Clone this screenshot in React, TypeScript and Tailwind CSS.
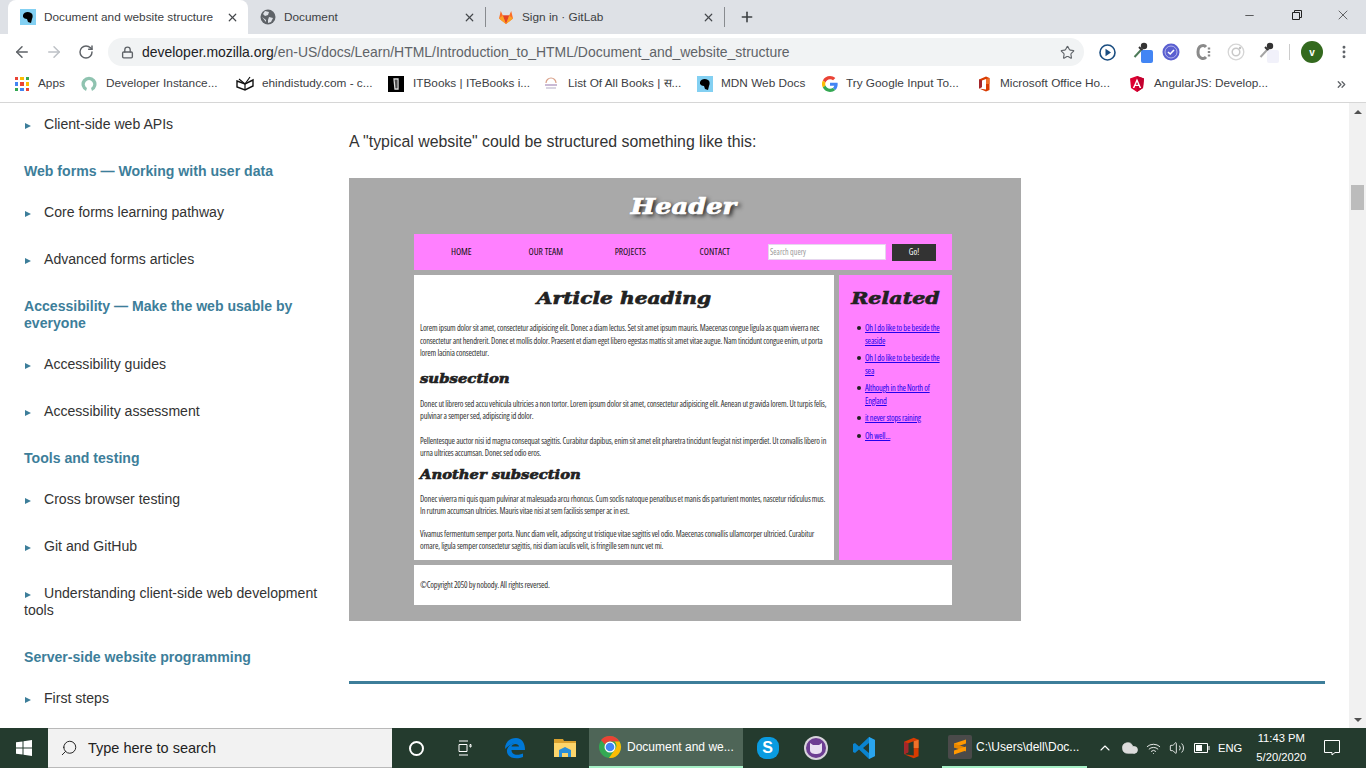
import { ArrowLeft, ArrowRight, RotateCw, Lock, Star, Plus, X, Minus, Search, MoreVertical, ChevronUp, Wifi, Volume2, Cloud, ChevronsRight } from 'lucide-react';

const sidebarRows = [
  { kind: 'item', text: 'Client-side web APIs' },
  { kind: 'head', text: 'Web forms — Working with user data' },
  { kind: 'item', text: 'Core forms learning pathway' },
  { kind: 'item', text: 'Advanced forms articles' },
  { kind: 'head', text: 'Accessibility — Make the web usable by everyone' },
  { kind: 'item', text: 'Accessibility guides' },
  { kind: 'item', text: 'Accessibility assessment' },
  { kind: 'head', text: 'Tools and testing' },
  { kind: 'item', text: 'Cross browser testing' },
  { kind: 'item', text: 'Git and GitHub' },
  { kind: 'item', text: 'Understanding client-side web development tools' },
  { kind: 'head', text: 'Server-side website programming' },
  { kind: 'item', text: 'First steps' },
];

function MdnIcon() {
  return (
    <svg width="16" height="16" viewBox="0 0 16 16" className="shrink-0">
      <rect width="16" height="16" fill="#83d0f2" />
      <path d="M3 6 C4 3 8 2 11 4 C13 5 13 8 12 10 L11 14 L8 13 L7 10 C5 10 4 9 3 8 Z" fill="#000" />
    </svg>
  );
}

function GlobeIcon() {
  return (
    <svg width="16" height="16" viewBox="0 0 16 16" className="shrink-0">
      <circle cx="8" cy="8" r="7.5" fill="#5f6368" />
      <path d="M5 2 L9 3 L8 6 L5 7 L3 5 Z M9 8 L13 9 L11 13 L8 14 L8 11 Z M2 8 L6 11 L6 13 Z" fill="#dee1e6" />
    </svg>
  );
}

function GitlabIcon() {
  return (
    <svg width="16" height="16" viewBox="0 0 16 16" className="shrink-0">
      <path d="M8 15 L1 9.5 L2.8 2 L4.8 6.5 H11.2 L13.2 2 L15 9.5 Z" fill="#fc6d26" />
      <path d="M8 15 L4.8 6.5 H11.2 Z" fill="#e24329" />
      <path d="M8 15 L1 9.5 L4.8 6.5 Z M8 15 L15 9.5 L11.2 6.5 Z" fill="#fca326" />
    </svg>
  );
}

function AppsIcon() {
  const colors = ['#ea4335', '#fbbc04', '#34a853', '#4285f4', '#ea4335', '#fbbc04', '#34a853', '#4285f4', '#ea4335'];
  return (
    <div className="grid h-[14px] w-[14px] shrink-0 grid-cols-3 gap-[2px]">
      {colors.map((c, i) => (
        <div key={i} style={{ background: c }} />
      ))}
    </div>
  );
}

function RingIcon() {
  return (
    <svg width="16" height="16" viewBox="0 0 16 16" className="shrink-0">
      <path d="M5 15 A7.500 7.500 0 1 1 11 15 L10 12 A4.200 4.200 0 1 0 6 12 Z" fill="#8fc3b0" />
    </svg>
  );
}

function BookIcon() {
  return (
    <svg width="18" height="16" viewBox="0 0 18 16" className="shrink-0">
      <path d="M1 5 L9 8 L17 4 L17 10 L9 14 L1 11 Z" fill="#fff" stroke="#111" strokeWidth="1.4" />
      <path d="M9 8 L9 14 M3 3 L9 8 L14 1" fill="none" stroke="#111" strokeWidth="1.2" />
    </svg>
  );
}

function ItBooksIcon() {
  return (
    <svg width="16" height="16" viewBox="0 0 16 16" className="shrink-0">
      <rect width="16" height="16" fill="#000" />
      <path d="M6 3 H10 V13 H7 Z" fill="none" stroke="#ddd" strokeWidth="1.3" />
      <path d="M8 4 V12" stroke="#999" />
    </svg>
  );
}

function ListBooksIcon() {
  return (
    <svg width="16" height="16" viewBox="0 0 16 16" className="shrink-0">
      <path d="M3 7 A5 5 0 0 1 13 7" fill="none" stroke="#d9a088" strokeWidth="1.2" />
      <path d="M2 9 H14" stroke="#b8a3c7" strokeWidth="1.5" />
      <path d="M3 12 H13" stroke="#ccc7d8" strokeWidth="1.5" />
    </svg>
  );
}

function GoogleIcon() {
  return (
    <svg width="16" height="16" viewBox="0 0 48 48" className="shrink-0">
      <path fill="#EA4335" d="M24 9.5c3.5 0 6.7 1.2 9.2 3.6l6.9-6.9C35.9 2.4 30.5 0 24 0 14.6 0 6.5 5.4 2.6 13.2l8 6.2C12.4 13.7 17.7 9.5 24 9.5z" />
      <path fill="#4285F4" d="M47 24.5c0-1.6-.1-3.100-.4-4.500H24v9h12.900c-.6 3-2.200 5.500-4.700 7.200l7.700 6C44.400 37.700 47 31.700 47 24.500z" />
      <path fill="#FBBC05" d="M10.500 28.600A14.500 14.500 0 0 1 10.500 19.400l-8-6.200a24 24 0 0 0 0 21.600l8-6.200z" />
      <path fill="#34A853" d="M24 48c6.500 0 11.900-2.100 15.900-5.800l-7.700-6c-2.200 1.500-5 2.300-8.200 2.300-6.300 0-11.600-4.200-13.500-9.900l-8 6.200C6.500 42.600 14.600 48 24 48z" />
    </svg>
  );
}

function OfficeIcon({ size = 16 }: { size?: number }) {
  return (
    <svg width={size} height={size} viewBox="0 0 16 16" className="shrink-0">
      <path d="M3 3.500 L10 .5 L13.500 2 V14 L10 15.500 L3 12.500 L10 13.500 V3 L6 4.500 V11 L3 12.500 Z" fill="#d83b01" />
      <path d="M10 3 L13.500 2 V8 H10 Z" fill="#f0712a" />
      <path d="M3 3.500 L6 4.500 V11 L3 12.500 Z" fill="#a4262c" />
    </svg>
  );
}

function AngularIcon() {
  return (
    <svg width="16" height="16" viewBox="0 0 16 16" className="shrink-0">
      <path d="M8 0 L15 2.500 L14 12 L8 16 L2 12 L1 2.500 Z" fill="#dd0031" />
      <path d="M8 0 L15 2.500 L14 12 L8 16 Z" fill="#c3002f" />
      <path d="M8 2.500 L3.800 12 H5.400 L6.200 10 H9.800 L10.600 12 H12.200 Z M8 6 L9.200 8.700 H6.800 Z" fill="#fff" />
    </svg>
  );
}

function ChromeIcon() {
  return (
    <svg width="24" height="24" viewBox="0 0 24 24" className="shrink-0">
      <circle cx="12" cy="12" r="11" fill="#34a853" />
      <path d="M12 1 A11 11 0 0 1 21.500 6.500 H12 A5.500 5.500 0 0 0 7 9.500 L3 5 A11 11 0 0 1 12 1 Z" fill="#ea4335" />
      <path d="M21.500 6.500 A11 11 0 0 1 11 23 L16.500 15 A5.500 5.500 0 0 0 16.500 6.500 Z" fill="#fbbc04" />
      <circle cx="12" cy="12" r="5.500" fill="#fff" />
      <circle cx="12" cy="12" r="4.300" fill="#4285f4" />
    </svg>
  );
}

function WindowsLogo() {
  return (
    <svg width="16" height="16" viewBox="0 0 16 16" className="shrink-0">
      <path d="M0 2.300 L6.500 1.400 V7.500 H0 Z M7.500 1.200 L16 0 V7.500 H7.500 Z M0 8.500 H6.500 V14.600 L0 13.700 Z M7.500 8.500 H16 V16 L7.500 14.800 Z" fill="#fff" />
    </svg>
  );
}

function EdgeIcon() {
  return (
    <svg width="24" height="24" viewBox="0 0 24 24" className="shrink-0">
      <path d="M2 13 C2 6 7 2 13 2 C19 2 22 7 22 14 H8.500 C8.500 18 13 20.500 20 17.500 V21 C13 24 3 22 4 14 C5 10 8 8 11 7.500 C8 8 5 10 2 13 Z M8.500 10.500 H16 C16 7 9 7 8.500 10.500 Z" fill="#0078d7" />
    </svg>
  );
}

function FolderIcon() {
  return (
    <svg width="22" height="20" viewBox="0 0 22 20" className="shrink-0">
      <path d="M0 1 H9 L10 3 H22 V19 H0 Z" fill="#d9a12f" />
      <path d="M0 5 H22 V19 H0 Z" fill="#fcd56b" />
      <path d="M5 19 V12 L11 9 L17 12 V19 H14 V15 H8 V19 Z" fill="#2a8fd8" />
    </svg>
  );
}

function SkypeIcon() {
  return (
    <div className="flex h-[22px] w-[22px] shrink-0 items-center justify-center rounded-[9px] bg-[#0a9be0] font-['Liberation_Sans',sans-serif] text-[16px] font-bold text-white">
      S
    </div>
  );
}

function CatIcon() {
  return (
    <svg width="24" height="24" viewBox="0 0 24 24" className="shrink-0">
      <circle cx="12" cy="12" r="12" fill="#d8d4dc" />
      <circle cx="12" cy="12" r="10" fill="#6d3e93" />
      <path d="M6 7 L9 9 H15 L18 7 V14 C18 17 15 18 12 18 C9 18 6 17 6 14 Z" fill="#e9e0f2" />
    </svg>
  );
}

function VscodeIcon() {
  return (
    <svg width="24" height="24" viewBox="0 0 24 24" className="shrink-0">
      <path d="M17 1 L23 4 V20 L17 23 L7 13.500 L3 17 L1 16 V8 L3 7 L7 10.500 Z M17 7 L11 12 L17 17 Z" fill="#0a84d0" />
      <path d="M17 1 L23 4 V20 L17 23 Z" fill="#2aa5ee" />
    </svg>
  );
}

function SublimeIcon() {
  return (
    <div className="flex h-[24px] w-[24px] shrink-0 items-center justify-center rounded-[2px] bg-[#4a4a4a]">
      <svg width="14" height="18" viewBox="0 0 14 18">
        <path d="M1 5.500 L13 1.500 V5.500 L1 9.500 Z" fill="#ff9800" />
        <path d="M1 5.500 L13 9.500 V13.500 L1 9.500 Z" fill="#e68600" />
        <path d="M1 12.500 L13 8.500 V12.500 L1 16.500 Z" fill="#ff9800" />
      </svg>
    </div>
  );
}

function Dropper({ stem, badge }: { stem: string; badge: string }) {
  return (
    <div className="relative h-[22px] w-[22px]">
      <svg width="16" height="18" viewBox="0 0 16 18" className="-mt-[1px]">
        <path d="M2.500 16 L9 9" stroke={stem} strokeWidth="2" />
        <path d="M7 6 L11.500 10.500" stroke="#333" strokeWidth="2" />
        <circle cx="12" cy="5" r="3.200" fill="#333" />
      </svg>
      <div className={`absolute left-[9px] top-[9px] h-[13px] w-[12px] rounded-[2px] ${badge}`} />
    </div>
  );
}

function TabClose() {
  return <X size={13} strokeWidth={2.2} className="shrink-0 text-[#45484c]" />;
}

function ChromeBars() {
  return (
    <>
      {/* tabs */}
      <div className="flex h-[34px] shrink-0 items-end bg-[#dee1e6] pl-2 font-['Liberation_Sans',sans-serif] text-[11.8px] text-[#3c4043]">
        <div className="flex h-[34px] w-[240px] items-center rounded-t-[8px] bg-white pl-3">
          <MdnIcon />
          <span className="ml-2 w-[172px] overflow-hidden whitespace-nowrap pt-[2px]">Document and website structure</span>
          <div className="ml-[10px]"><TabClose /></div>
        </div>
        <div className="flex h-[34px] w-[238px] items-center pl-3">
          <GlobeIcon />
          <span className="ml-2 w-[182px] pt-[2px]">Document</span>
          <TabClose />
          <div className="ml-[9px] h-[20px] w-px bg-[#888b8f]" />
        </div>
        <div className="flex h-[34px] w-[239px] items-center pl-3">
          <GitlabIcon />
          <span className="ml-2 w-[181px] pt-[2px]">Sign in · GitLab</span>
          <TabClose />
          <div className="ml-[9px] h-[20px] w-px bg-[#888b8f]" />
        </div>
        <div className="flex h-[34px] items-center pl-[14px]">
          <Plus size={16} strokeWidth={2.4} className="text-[#3c4043]" />
        </div>
        <div className="ml-auto flex h-[34px] items-center pb-[4px] text-[#222]">
          <Minus size={13} strokeWidth={1.3} />
          <svg width="12" height="12" viewBox="0 0 12 12" className="ml-[35px]">
            <path d="M1.500 3.500 H8.500 V10.500 H1.500 Z M3.500 3.500 V1.500 H10.500 V8.500 H8.500" fill="none" stroke="#222" />
          </svg>
          <X size={16} strokeWidth={1} className="ml-[32px] mr-[15px]" />
        </div>
      </div>

      {/* toolbar */}
      <div className="flex h-[34px] shrink-0 items-center bg-white pl-[13px] pt-[2px] font-['Liberation_Sans',sans-serif]">
        <ArrowLeft size={18} strokeWidth={2} className="text-[#5f6368]" />
        <ArrowRight size={18} strokeWidth={2} className="ml-[14px] text-[#bdc1c6]" />
        <RotateCw size={16} strokeWidth={2.2} className="ml-[15px] text-[#5f6368]" />
        <div className="ml-[14px] flex h-[28px] w-[976px] items-center rounded-full bg-[#f1f3f4] pl-[13px] text-[13.96px]">
          <Lock size={13} strokeWidth={2.5} className="text-[#5f6368]" />
          <span className="ml-[8px] text-[#202124]">developer.mozilla.org</span>
          <span className="text-[#5f6368]">/en-US/docs/Learn/HTML/Introduction_to_HTML/Document_and_website_structure</span>
          <Star size={15} strokeWidth={1.8} className="ml-auto mr-[9px] text-[#5f6368]" />
        </div>
        <svg width="17" height="17" viewBox="0 0 17 17" className="ml-[15px]">
          <circle cx="8.500" cy="8.500" r="7.500" fill="none" stroke="#1a4d80" strokeWidth="1.600" />
          <path d="M6.500 4.800 L12 8.500 L6.500 12.200 Z" fill="#1a4d80" />
        </svg>
        <div className="ml-[16px]"><Dropper stem="#4d7a58" badge="bg-[#4285f4]" /></div>
        <svg width="18" height="18" viewBox="0 0 18 18" className="ml-[8px]">
          <circle cx="9" cy="9" r="8.500" fill="#5a5fd0" />
          <circle cx="9" cy="9" r="6" fill="none" stroke="#c9caf2" strokeWidth=".8" />
          <path d="M6 9 L8.200 11 L12 7" fill="none" stroke="#fff" strokeWidth="1.600" />
        </svg>
        <svg width="16" height="18" viewBox="0 0 16 18" className="ml-[16px]">
          <path d="M10 4 C8 1.500 2 2 2 9 C2 16 8 16.500 10 14" fill="none" stroke="#8a8a8a" strokeWidth="3" />
          <path d="M13 4.500 V6.500 M13 8 V10 M13 11.500 V13.500" stroke="#8a8a8a" strokeWidth="2.400" />
        </svg>
        <svg width="18" height="18" viewBox="0 0 18 18" className="ml-[15px]">
          <circle cx="9" cy="9" r="7.800" fill="none" stroke="#d5d5d5" strokeWidth="1.300" />
          <circle cx="9" cy="9" r="3.800" fill="none" stroke="#c8c8c8" strokeWidth="1.500" />
          <circle cx="13" cy="5" r="1.200" fill="#c0c0c0" />
        </svg>
        <div className="ml-[13px]"><Dropper stem="#a5a5a5" badge="bg-[#f1f1fa]" /></div>
        <div className="ml-[9px] h-[16px] w-px bg-[#ccc]" />
        <div className="ml-[11px] flex h-[22px] w-[22px] items-center justify-center rounded-full bg-[#33691e] text-[10px] font-bold text-white">
          v
        </div>
        <MoreVertical size={16} strokeWidth={2.4} className="ml-[13px] text-[#5f6368]" />
      </div>

      {/* bookmarks */}
      <div className="flex h-[35px] shrink-0 items-center border-b border-[#d6d6d6] bg-white pb-[2px] pl-[15px] font-['Liberation_Sans',sans-serif] text-[11.8px] text-[#3c4043]">
        <div className="flex w-[66px] items-center gap-[9px]"><AppsIcon /><span>Apps</span></div>
        <div className="flex w-[155px] items-center gap-[9px] whitespace-nowrap"><RingIcon /><span>Developer Instance...</span></div>
        <div className="flex w-[152px] items-center gap-[8px] whitespace-nowrap"><BookIcon /><span>ehindistudy.com - c...</span></div>
        <div className="flex w-[155px] items-center gap-[9px] whitespace-nowrap"><ItBooksIcon /><span>ITBooks | ITeBooks i...</span></div>
        <div className="flex w-[154px] items-center gap-[9px] whitespace-nowrap"><ListBooksIcon /><span>List Of All Books | स...</span></div>
        <div className="flex w-[125px] items-center gap-[8px] whitespace-nowrap"><MdnIcon /><span>MDN Web Docs</span></div>
        <div className="flex w-[154px] items-center gap-[8px] whitespace-nowrap"><GoogleIcon /><span>Try Google Input To...</span></div>
        <div className="flex w-[153px] items-center gap-[8px] whitespace-nowrap"><OfficeIcon /><span>Microsoft Office Ho...</span></div>
        <div className="flex w-[206px] items-center gap-[9px] whitespace-nowrap"><AngularIcon /><span>AngularJS: Develop...</span></div>
        <ChevronsRight size={13} strokeWidth={2.4} className="text-[#5f6368]" />
      </div>
    </>
  );
}

function Sidebar() {
  return (
    <div className="flex w-[349px] shrink-0 flex-col gap-[30px] pl-6 pr-[26px] pt-[13px] font-['Liberation_Sans',sans-serif] text-[14.08px] leading-[17px]">
      {sidebarRows.map((row, i) =>
        row.kind === 'head' ? (
          <div key={i} className="-mb-[6px] font-bold text-[#3d7e9a]">{row.text}</div>
        ) : (
          <div key={i} className="text-[#333]">
            <span className="ml-[1px] mr-[13px] inline-block h-0 w-0 border-y-[3.5px] border-l-[6px] border-y-transparent border-l-[#3d7e9a]" />
            {row.text}
          </div>
        )
      )}
    </div>
  );
}

function SampleHeading({ className, children }: { className: string; children: string }) {
  return (
    <div className={`font-['DejaVu_Serif',serif] font-bold italic text-[#222] [-webkit-text-stroke:0.6px_#222] ${className}`}>
      {children}
    </div>
  );
}

function SampleLines({ lines }: { lines: string[] }) {
  return (
    <div className="text-[8.4px] leading-[12.5px] tracking-[-0.2px] text-[#333]">
      {lines.map((l, i) => (
        <div key={i} className="whitespace-nowrap">{l}</div>
      ))}
    </div>
  );
}

// the website layout picture inside the article
function SamplePage() {
  const links = [
    ['Oh I do like to be beside the', 'seaside'],
    ['Oh I do like to be beside the', 'sea'],
    ['Although in the North of', 'England'],
    ['it never stops raining'],
    ['Oh well...'],
  ];
  return (
    <div className="mt-[24px] flex h-[443px] w-[672px] flex-col bg-[#a9a9a9] pl-[65px] font-['Open_Sans',sans-serif] font-stretch-condensed">
      <div className="mt-[14px] flex h-[28px] w-[538px] justify-center">
        <div className="scale-x-[1.3] font-['DejaVu_Serif',serif] text-[22px] font-bold italic leading-[28px] text-white [-webkit-text-stroke:0.7px_#fff] [text-shadow:2px_2px_4px_#222]">
          Header
        </div>
      </div>
      <div className="mt-[14px] flex h-[36px] w-[538px] items-center bg-[#ff80ff] pl-[5px] text-[9.500px] text-[#111]">
        {['HOME', 'OUR TEAM', 'PROJECTS', 'CONTACT'].map(n => (
          <div key={n} className="w-[84.500px] text-center">{n}</div>
        ))}
        <div className="ml-[11px] flex h-[16px] w-[118px] items-center border border-[#e6d6ee] bg-white pl-[1px] text-[8px] text-[#999]">
          Search query
        </div>
        <div className="ml-[6px] flex h-[17px] w-[44px] items-center justify-center bg-[#333] text-[8.500px] text-white">Go!</div>
      </div>
      <div className="mt-[5px] flex h-[285px] w-[538px] gap-[5px]">
        <div className="w-[420px] bg-white px-[6px] pt-[13px]">
          <SampleHeading className="scale-x-[1.32] text-center text-[17px] leading-[20px]">Article heading</SampleHeading>
          <div className="mt-[14px]">
            <SampleLines lines={[
              'Lorem ipsum dolor sit amet, consectetur adipisicing elit. Donec a diam lectus. Set sit amet ipsum mauris. Maecenas congue ligula as quam viverra nec',
              'consectetur ant hendrerit. Donec et mollis dolor. Praesent et diam eget libero egestas mattis sit amet vitae augue. Nam tincidunt congue enim, ut porta',
              'lorem lacinia consectetur.',
            ]} />
          </div>
          <SampleHeading className="mt-[11px] origin-left scale-x-[1.27] text-[13px] leading-[15px]">subsection</SampleHeading>
          <div className="mt-[12px]">
            <SampleLines lines={[
              'Donec ut librero sed accu vehicula ultricies a non tortor. Lorem ipsum dolor sit amet, consectetur adipisicing elit. Aenean ut gravida lorem. Ut turpis felis,',
              'pulvinar a semper sed, adipiscing id dolor.',
            ]} />
          </div>
          <div className="mt-[12px]">
            <SampleLines lines={[
              'Pellentesque auctor nisi id magna consequat sagittis. Curabitur dapibus, enim sit amet elit pharetra tincidunt feugiat nist imperdiet. Ut convallis libero in',
              'urna ultrices accumsan. Donec sed odio eros.',
            ]} />
          </div>
          <SampleHeading className="mt-[7px] origin-left scale-x-[1.26] text-[13px] leading-[15px]">Another subsection</SampleHeading>
          <div className="mt-[11px]">
            <SampleLines lines={[
              'Donec viverra mi quis quam pulvinar at malesuada arcu rhoncus. Cum soclis natoque penatibus et manis dis parturient montes, nascetur ridiculus mus.',
              'In rutrum accumsan ultricies. Mauris vitae nisi at sem facilisis semper ac in est.',
            ]} />
          </div>
          <div className="mt-[10px]">
            <SampleLines lines={[
              'Vivamus fermentum semper porta. Nunc diam velit, adipscing ut tristique vitae sagittis vel odio. Maecenas convallis ullamcorper ultricied. Curabitur',
              'ornare, ligula semper consectetur sagittis, nisi diam iaculis velit, is fringille sem nunc vet mi.',
            ]} />
          </div>
        </div>
        <div className="flex-1 bg-[#ff80ff] pt-[13px]">
          <SampleHeading className="scale-x-[1.35] text-center text-[17px] leading-[20px]">Related</SampleHeading>
          <div className="ml-[18px] mt-[14px] flex flex-col gap-[5px]">
            {links.map((lines, i) => (
              <div key={i} className="flex">
                <div className="mr-[4px] mt-[4px] h-[4px] w-[4px] shrink-0 rounded-full bg-[#222]" />
                <div className="text-[8.400px] leading-[12.500px] tracking-[-0.2px] text-[#2200ee] underline">
                  {lines.map(l => <div key={l} className="whitespace-nowrap">{l}</div>)}
                </div>
              </div>
            ))}
          </div>
        </div>
      </div>
      <div className="mt-[5px] flex h-[40px] w-[538px] items-center bg-white pl-[6px] text-[8.400px] tracking-[-0.2px] text-[#333]">
        ©Copyright 2050 by nobody. All rights reversed.
      </div>
    </div>
  );
}

function Scrollbar() {
  return (
    <div className="flex w-[17px] shrink-0 flex-col items-center bg-[#f1f1f1]">
      <div className="mt-[7px] h-0 w-0 border-x-[4px] border-b-[4px] border-x-transparent border-b-[#505050]" />
      <div className="mt-[71px] h-[25px] w-[13px] bg-[#bcbcbc]" />
      <div className="mt-auto mb-[6px] h-0 w-0 border-x-[4px] border-t-[4px] border-x-transparent border-t-[#505050]" />
    </div>
  );
}

function Taskbar() {
  return (
    <div className="flex h-[40px] shrink-0 items-center bg-[#243b2e] font-['Liberation_Sans',sans-serif] text-white">
      <div className="flex w-[48px] justify-center"><WindowsLogo /></div>
      <div className="flex h-[40px] w-[344px] items-center border-y border-[#b9b9b9] bg-[#f2f2f2] pl-[12px] text-[14.500px] text-[#222]">
        <Search size={18} strokeWidth={1.3} className="-scale-x-100 text-[#222]" />
        <span className="ml-[10px] pt-[2px]">Type here to search</span>
      </div>
      <div className="flex w-[48px] justify-center">
        <div className="h-[15px] w-[15px] rounded-full border-[2px] border-white" />
      </div>
      <div className="flex w-[48px] justify-center">
        <svg width="16" height="16" viewBox="0 0 16 16">
          <path d="M3 1 H12 M3 15 H12 M3 4.500 H11 V11.500 H3 Z M14 4.500 H15 V7 H14 Z" fill="none" stroke="#fff" />
        </svg>
      </div>
      <div className="flex w-[53px] justify-center"><EdgeIcon /></div>
      <div className="flex w-[48px] justify-center"><FolderIcon /></div>
      <div className="flex h-[40px] w-[154px] items-center border-b-[2px] border-[#a6f0c6] bg-[#4e6557] pl-[9px] text-[12px]">
        <ChromeIcon />
        <span className="ml-[5px] whitespace-nowrap">Document and we...</span>
      </div>
      <div className="flex w-[49px] justify-center"><SkypeIcon /></div>
      <div className="flex w-[48px] justify-center"><CatIcon /></div>
      <div className="flex w-[48px] justify-center"><VscodeIcon /></div>
      <div className="flex w-[46px] justify-center"><OfficeIcon size={22} /></div>
      <div className="ml-[8px] flex h-[40px] w-[145px] items-center border-b-[2px] border-[#a6f0c6] pl-[6px] text-[12px]">
        <SublimeIcon />
        <span className="ml-[4px] whitespace-nowrap">C:\Users\dell\Doc...</span>
      </div>
      <ChevronUp size={16} strokeWidth={1.6} className="ml-[10px]" />
      <Cloud size={18} strokeWidth={1} fill="#dcdcdc" className="ml-[8px] text-[#dcdcdc]" />
      <Wifi size={15} strokeWidth={1.4} className="ml-[7px]" />
      <Volume2 size={16} strokeWidth={1.3} className="ml-[8px]" />
      <svg width="16" height="10" viewBox="0 0 16 10" className="ml-[9px]">
        <path d="M.5 .5 H13.500 V9.500 H.5 Z" fill="none" stroke="#fff" />
        <path d="M2 2 H8 V8 H2 Z M14.500 3 H15.500 V7 H14.500 Z" fill="#fff" />
      </svg>
      <span className="ml-[8px] text-[11.2px]">ENG</span>
      <div className="ml-[11px] w-[56px] text-center text-[11.2px] leading-[19px]">
        <div>11:43 PM</div>
        <div>5/20/2020</div>
      </div>
      <svg width="16" height="16" viewBox="0 0 16 16" className="ml-[15px]">
        <path d="M.5 .5 H15.500 V12.500 H11 L8 15 V12.500 H.5 Z" fill="none" stroke="#fff" />
      </svg>
    </div>
  );
}

export default function App() {
  return (
    <div className="flex h-[768px] w-[1366px] flex-col overflow-hidden bg-white">
      <ChromeBars />
      <div className="flex min-h-0 flex-1 overflow-hidden">
        <Sidebar />
        <div className="flex-1 pt-[27px] font-['Liberation_Sans',sans-serif]">
          <p className="text-[15.88px] leading-[24px] text-[#333]">A "typical website" could be structured something like this:</p>
          <SamplePage />
          <div className="mt-[60px] h-[3px] w-[976px] bg-[#3d7e9a]" />
        </div>
        <Scrollbar />
      </div>
      <Taskbar />
    </div>
  );
}
